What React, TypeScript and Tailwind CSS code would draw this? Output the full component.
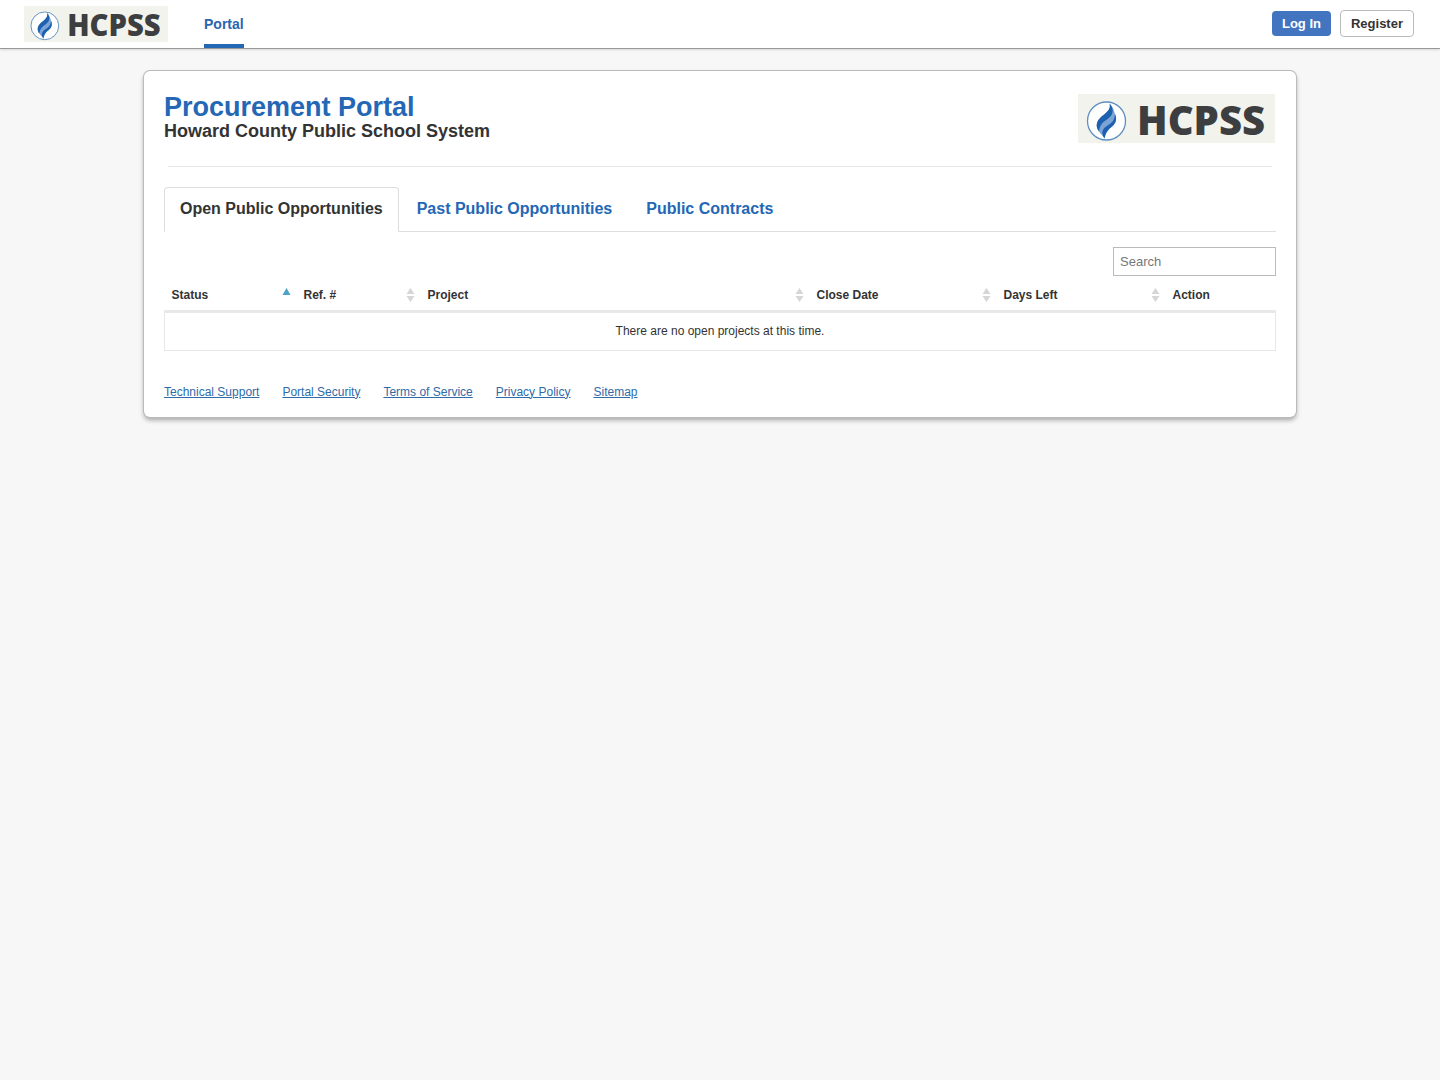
import { useState } from "react"
import { clsx } from "clsx"

type SortDirection = "asc" | "none"

interface Column {
  label: string
  width: string
  sort?: SortDirection
}

const tabs = ["Open Public Opportunities", "Past Public Opportunities", "Public Contracts"]

const columns: Column[] = [
  { label: "Status", width: "w-[132px]", sort: "asc" },
  { label: "Ref. #", width: "w-[124px]", sort: "none" },
  { label: "Project", width: "w-auto", sort: "none" },
  { label: "Close Date", width: "w-[187px]", sort: "none" },
  { label: "Days Left", width: "w-[169px]", sort: "none" },
  { label: "Action", width: "w-[110px]" },
]

const footerLinks = [
  "Technical Support",
  "Portal Security",
  "Terms of Service",
  "Privacy Policy",
  "Sitemap",
]

function Logo({ className }: { className?: string }) {
  return (
    <svg
      viewBox="0 0 197 49"
      className={clsx("overflow-visible", className)}
      role="img"
      aria-label="HCPSS"
    >
      <rect width="197" height="49" fill="#f3f3ee" />
      <circle cx="28.5" cy="27" r="19" fill="#fff" stroke="#5f8fc0" strokeWidth="1.3" />
      {/* flame */}
      <path
        d="M31.500 9.500C33 14 30 17.500 25.500 21C19 25.500 16.500 31.500 21 37.500C23 40.500 25 41.500 26.500 44.500C27.500 41.500 27 39.500 29 37C31.500 34 37 32 37.800 26.500C38.300 23 37 21 36.500 18.500C35.500 15 34.500 12.500 31.500 9.500Z"
        fill="#7ba3d6"
      />
      <path
        d="M31.500 9.500C34.500 12.500 35.500 16.500 34 20C32 24.500 27 26 24 29.500C22 32 21.500 34.500 21 37.500C16.500 31.500 19 25.500 25.500 21C30 17.500 33 14 31.500 9.500Z"
        fill="#1d60b0"
      />
      <path
        d="M37 20C38.800 23.500 38.500 28 35.500 31C32 34.500 28.500 36 26.500 44.500C24 41 23.500 38 25.500 35C28 31.500 33.500 30 35.500 26C36.500 24 37 22 37 20Z"
        fill="#1d60b0"
      />
      <text
        x="59"
        y="41"
        fontSize="40"
        fontWeight="800"
        fill="#3d3e3f"
        className="font-['Open_Sans',sans-serif]"
      >
        HCPSS
      </text>
    </svg>
  )
}

function SortIcon({ direction }: { direction: SortDirection }) {
  return (
    <svg viewBox="0 0 9 14" className="h-3.5 w-[9px]" aria-hidden="true">
      {direction === "asc" ? (
        <path d="M4.500 0L8.500 7H0.500Z" fill="#4ba3c7" />
      ) : (
        <path d="M4.500 0L8.500 6H0.500ZM4.500 14L8.500 8H0.500Z" fill="#d6d6d6" />
      )}
    </svg>
  )
}

function Header() {
  return (
    <header className="flex h-[49px] items-stretch justify-between border-b border-[#999] bg-white pr-[26px] pl-6 shadow-sm">
      <div className="flex">
        <a href="#" className="mt-1.5">
          <Logo className="h-9 w-36" />
        </a>
        <nav className="ml-9 flex">
          <a
            href="#"
            className="flex items-center border-b-4 border-[#2467b5] pt-1 text-sm font-bold text-[#2a66ae]"
          >
            Portal
          </a>
        </nav>
      </div>
      <div className="flex items-center gap-[9px] pb-px text-[13px] font-bold">
        <button type="button" className="h-[25px] rounded bg-[#4274c0] px-2.5 text-white">
          Log In
        </button>
        <button
          type="button"
          className="h-[27px] rounded border border-[#bbb] bg-white px-2.5 text-[#333]"
        >
          Register
        </button>
      </div>
    </header>
  )
}

function ProjectTable() {
  return (
    <table className="w-full table-fixed border-collapse text-xs text-[#333]">
      <thead>
        <tr>
          {columns.map((col) => (
            <th
              key={col.label}
              scope="col"
              className={clsx("h-[35px] p-0 pt-1 pl-[7px] text-left", col.width)}
            >
              <div className="flex items-center justify-between pr-1.5">
                {col.label}
                {col.sort && <SortIcon direction={col.sort} />}
              </div>
            </th>
          ))}
        </tr>
      </thead>
      <tbody>
        <tr>
          <td
            colSpan={columns.length}
            className="h-[39px] border border-t-3 border-[#e8e8e8] p-0 text-center"
          >
            There are no open projects at this time.
          </td>
        </tr>
      </tbody>
    </table>
  )
}

export default function App() {
  const [activeTab, setActiveTab] = useState(tabs[0])
  const [query, setQuery] = useState("")

  return (
    <div className="flow-root min-h-screen bg-[#f7f7f7] font-['Liberation_Sans',Arial,sans-serif] text-[#333]">
      <Header />
      <main className="mx-auto mt-[22px] w-4/5 rounded-md bg-white px-5 pb-[17px] shadow-[0_3px_5px_rgba(0,0,0,0.35)] ring-1 ring-[#bbb]">
        <div className="flex items-start justify-between pt-[22px]">
          <div>
            <h1 className="text-[27px] leading-7 font-bold text-[#2467b5]">Procurement Portal</h1>
            <h2 className="text-lg leading-5 font-bold">Howard County Public School System</h2>
          </div>
          <Logo className="mt-px mr-px h-[49px] w-[197px]" />
        </div>
        <hr className="mx-1 mt-[23px] border-[#e8e8e8]" />

        <div role="tablist" className="mt-5 flex border-b border-[#ddd] text-base font-bold">
          {tabs.map((tab) => (
            <button
              key={tab}
              type="button"
              role="tab"
              aria-selected={tab === activeTab}
              onClick={() => setActiveTab(tab)}
              className={clsx(
                "-mb-px mr-0.5 h-[45px] rounded-t border px-[15px] pb-0.5",
                tab === activeTab
                  ? "border-[#ddd] border-b-white bg-white text-[#333]"
                  : "border-transparent text-[#2467b5]",
              )}
            >
              {tab}
            </button>
          ))}
        </div>

        <div className="mt-[15px] flex justify-end">
          <input
            type="search"
            aria-label="Search"
            placeholder="Search"
            value={query}
            onChange={(e) => setQuery(e.target.value)}
            className="h-[29px] w-[163px] border border-[#bbb] px-1.5 text-[13px] placeholder:text-[#777]"
          />
        </div>
        <ProjectTable />

        <footer className="mt-[33px] flex gap-[23px] text-xs text-[#2f6ba8]">
          {footerLinks.map((link) => (
            <a key={link} href="#" className="underline">
              {link}
            </a>
          ))}
        </footer>
      </main>
    </div>
  )
}
